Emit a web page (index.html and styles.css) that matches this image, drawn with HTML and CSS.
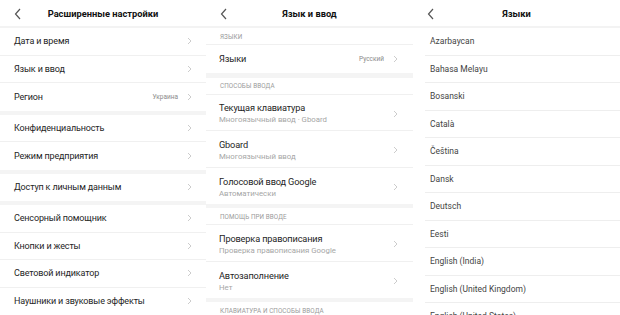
FILE: index.html
```html
<!DOCTYPE html>
<html lang="ru">
<head>
<meta charset="utf-8">
<title>Настройки</title>
<link rel="stylesheet" href="styles.css">
</head>
<body>
<div class="screens">
  <section class="screen">
    <header class="bar">
      <svg class="back" width="8" height="12" viewBox="0 0 8 12"><polyline points="6,1 1.5,6 6,11" fill="none" stroke="#555" stroke-width="1.2"/></svg>
      <h1 class="title">Расширенные настройки</h1>
      <span></span>
    </header>
    <div class="group">
      <div class="row"><span class="label">Дата и время</span><svg class="chev" width="5" height="8" viewBox="0 0 5 8"><polyline points="1,1 4,4 1,7" fill="none" stroke="#ccc" stroke-width="1"/></svg></div>
      <div class="row"><span class="label">Язык и ввод</span><svg class="chev" width="5" height="8" viewBox="0 0 5 8"><polyline points="1,1 4,4 1,7" fill="none" stroke="#ccc" stroke-width="1"/></svg></div>
      <div class="row"><span class="label">Регион</span><span class="value">Украина</span><svg class="chev" width="5" height="8" viewBox="0 0 5 8"><polyline points="1,1 4,4 1,7" fill="none" stroke="#ccc" stroke-width="1"/></svg></div>
    </div>
    <div class="group">
      <div class="row"><span class="label">Конфиденциальность</span><svg class="chev" width="5" height="8" viewBox="0 0 5 8"><polyline points="1,1 4,4 1,7" fill="none" stroke="#ccc" stroke-width="1"/></svg></div>
      <div class="row"><span class="label">Режим предприятия</span><svg class="chev" width="5" height="8" viewBox="0 0 5 8"><polyline points="1,1 4,4 1,7" fill="none" stroke="#ccc" stroke-width="1"/></svg></div>
    </div>
    <div class="group">
      <div class="row"><span class="label">Доступ к личным данным</span><svg class="chev" width="5" height="8" viewBox="0 0 5 8"><polyline points="1,1 4,4 1,7" fill="none" stroke="#ccc" stroke-width="1"/></svg></div>
    </div>
    <div class="group">
      <div class="row"><span class="label">Сенсорный помощник</span><svg class="chev" width="5" height="8" viewBox="0 0 5 8"><polyline points="1,1 4,4 1,7" fill="none" stroke="#ccc" stroke-width="1"/></svg></div>
      <div class="row"><span class="label">Кнопки и жесты</span><svg class="chev" width="5" height="8" viewBox="0 0 5 8"><polyline points="1,1 4,4 1,7" fill="none" stroke="#ccc" stroke-width="1"/></svg></div>
      <div class="row"><span class="label">Световой индикатор</span><svg class="chev" width="5" height="8" viewBox="0 0 5 8"><polyline points="1,1 4,4 1,7" fill="none" stroke="#ccc" stroke-width="1"/></svg></div>
      <div class="row"><span class="label">Наушники и звуковые эффекты</span><svg class="chev" width="5" height="8" viewBox="0 0 5 8"><polyline points="1,1 4,4 1,7" fill="none" stroke="#ccc" stroke-width="1"/></svg></div>
    </div>
  </section>

  <section class="screen">
    <header class="bar">
      <svg class="back" width="8" height="12" viewBox="0 0 8 12"><polyline points="6,1 1.5,6 6,11" fill="none" stroke="#555" stroke-width="1.2"/></svg>
      <h1 class="title">Язык и ввод</h1>
      <span></span>
    </header>
    <div class="group">
      <div class="caption">ЯЗЫКИ</div>
      <div class="row"><span class="label">Языки</span><span class="value">Русский</span><svg class="chev" width="5" height="8" viewBox="0 0 5 8"><polyline points="1,1 4,4 1,7" fill="none" stroke="#ccc" stroke-width="1"/></svg></div>
    </div>
    <div class="group group-wide">
      <div class="caption">СПОСОБЫ ВВОДА</div>
      <div class="row row2"><div class="texts"><span class="label">Текущая клавиатура</span><span class="sub">Многоязычный ввод · Gboard</span></div><svg class="chev" width="5" height="8" viewBox="0 0 5 8"><polyline points="1,1 4,4 1,7" fill="none" stroke="#ccc" stroke-width="1"/></svg></div>
      <div class="row row2"><div class="texts"><span class="label">Gboard</span><span class="sub">Многоязычный ввод</span></div><svg class="chev" width="5" height="8" viewBox="0 0 5 8"><polyline points="1,1 4,4 1,7" fill="none" stroke="#ccc" stroke-width="1"/></svg></div>
      <div class="row row2"><div class="texts"><span class="label">Голосовой ввод Google</span><span class="sub">Автоматически</span></div><svg class="chev" width="5" height="8" viewBox="0 0 5 8"><polyline points="1,1 4,4 1,7" fill="none" stroke="#ccc" stroke-width="1"/></svg></div>
    </div>
    <div class="group">
      <div class="caption">ПОМОЩЬ ПРИ ВВОДЕ</div>
      <div class="row row2"><div class="texts"><span class="label">Проверка правописания</span><span class="sub">Проверка правописания Google</span></div><svg class="chev" width="5" height="8" viewBox="0 0 5 8"><polyline points="1,1 4,4 1,7" fill="none" stroke="#ccc" stroke-width="1"/></svg></div>
      <div class="row row2"><div class="texts"><span class="label">Автозаполнение</span><span class="sub">Нет</span></div><svg class="chev" width="5" height="8" viewBox="0 0 5 8"><polyline points="1,1 4,4 1,7" fill="none" stroke="#ccc" stroke-width="1"/></svg></div>
    </div>
    <div class="group">
      <div class="caption">КЛАВИАТУРА И СПОСОБЫ ВВОДА</div>
    </div>
  </section>

  <section class="screen">
    <header class="bar">
      <svg class="back" width="8" height="12" viewBox="0 0 8 12"><polyline points="6,1 1.5,6 6,11" fill="none" stroke="#555" stroke-width="1.2"/></svg>
      <h1 class="title">Языки</h1>
      <span></span>
    </header>
    <div class="langs">
      <div class="lang">Azarbaycan</div>
      <div class="lang">Bahasa Melayu</div>
      <div class="lang">Bosanski</div>
      <div class="lang">Català</div>
      <div class="lang">Čeština</div>
      <div class="lang">Dansk</div>
      <div class="lang">Deutsch</div>
      <div class="lang">Eesti</div>
      <div class="lang">English (India)</div>
      <div class="lang">English (United Kingdom)</div>
      <div class="lang">English (United States)</div>
    </div>
  </section>
</div>
</body>
</html>
```

FILE: styles.css
```css
* { box-sizing: border-box; }
html, body {
  margin: 0;
  padding: 0;
  background: #ffffff;
}
body {
  font-family: Roboto, "Noto Sans", "DejaVu Sans", sans-serif;
  color: #222;
}
.screens {
  width: 620px;
  height: 315px;
  overflow: hidden;
  display: grid;
  grid-template-columns: 206px 207px 207px;
}
.screen {
  height: 315px;
  overflow: hidden;
  display: flex;
  flex-direction: column;
}
.bar {
  flex: 0 0 28px;
  display: grid;
  grid-template-columns: 32px 1fr 32px;
  align-items: center;
  border-bottom: 2px solid #f3f3f3;
  padding-top: 1px;
}
.back {
  margin-left: 14px;
  display: block;
}
.title {
  margin: 0;
  font-size: 9.3px;
  font-weight: 700;
  text-align: center;
  color: #111;
}
.group {
  flex: 0 0 auto;
}
.group + .group {
  border-top: 4px solid #f4f4f4;
}
.group-wide {
  border-top-width: 5px !important;
}
.row {
  height: 27.5px;
  display: flex;
  align-items: center;
  padding: 0 14px 0 14px;
  border-bottom: 1px solid #f0f0f0;
}
.row:last-child {
  border-bottom: none;
}
.label {
  font-size: 9px;
  letter-spacing: -0.15px;
  color: #252525;
  flex: 1 1 auto;
  white-space: nowrap;
}
.value {
  font-size: 6.5px;
  color: #8a8a8a;
  margin-right: 9px;
}
.chev {
  flex: 0 0 5px;
  display: block;
}
.screen:nth-child(2) .row {
  padding-left: 13px;
  padding-right: 15px;
}
.screen:nth-child(2) .label {
  font-size: 9.2px;
}
.row2 {
  height: 36.5px;
  padding-top: 3px;
}
.texts {
  flex: 1 1 auto;
  display: flex;
  flex-direction: column;
  gap: 1px;
}
.texts .label {
  line-height: 12px;
}
.sub {
  font-size: 7.8px;
  line-height: 10px;
  color: #a6a6a6;
  white-space: nowrap;
}
.caption {
  height: 17px;
  display: flex;
  align-items: center;
  padding-left: 14px;
  padding-top: 1px;
  font-size: 6.3px;
  color: #9a9a9a;
  letter-spacing: 0.1px;
  border-bottom: 1px solid #f0f0f0;
}
.langs {
  display: flex;
  flex-direction: column;
  padding-left: 12px;
}
.lang {
  flex: 0 0 27.5px;
  display: flex;
  align-items: center;
  padding-left: 5px;
  font-size: 8.5px;
  color: #444;
  border-bottom: 1px solid #eeeeee;
  white-space: nowrap;
}
```
